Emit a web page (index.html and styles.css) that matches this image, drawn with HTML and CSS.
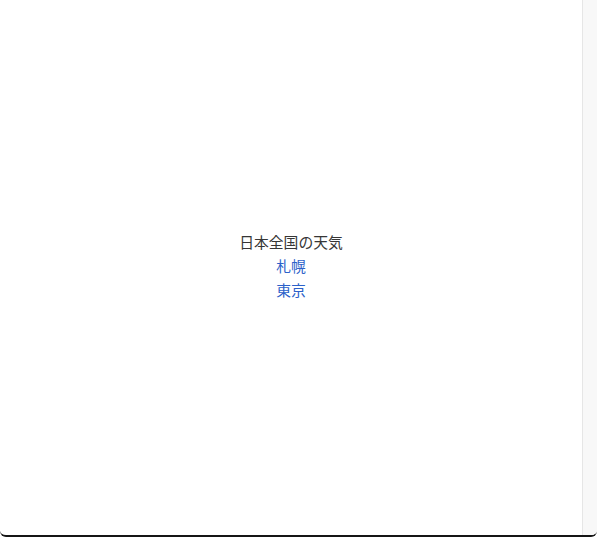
FILE: index.html
```html
<!DOCTYPE html>
<html lang="ja">
<head>
<meta charset="utf-8">
<title>日本全国の天気</title>
<link rel="stylesheet" href="styles.css">
</head>
<body>
<div class="frame">
  <main class="main">
    <div class="title">日本全国の天気</div>
    <a class="city" href="#">札幌</a>
    <a class="city" href="#">東京</a>
  </main>
  <div class="scrollbar"></div>
</div>
</body>
</html>
```

FILE: styles.css
```css
html, body {
  margin: 0;
  padding: 0;
  background: #ffffff;
}
.frame {
  box-sizing: border-box;
  width: 597px;
  height: 537px;
  display: flex;
  border-bottom: 2px solid #151515;
  border-radius: 0 0 6px 6px;
  overflow: hidden;
}
.main {
  flex: 1;
  display: flex;
  flex-direction: column;
  align-items: center;
  justify-content: center;
  padding-bottom: 4px;
  font-family: "Noto Sans CJK JP", "Noto Sans", sans-serif;
  font-size: 14.8px;
  line-height: 24px;
  color: #363636;
}
.city {
  color: #2c61c9;
  text-decoration: none;
}
.scrollbar {
  width: 14px;
  background: #f8f8f8;
  border-left: 1px solid #e6e6e6;
}
```
